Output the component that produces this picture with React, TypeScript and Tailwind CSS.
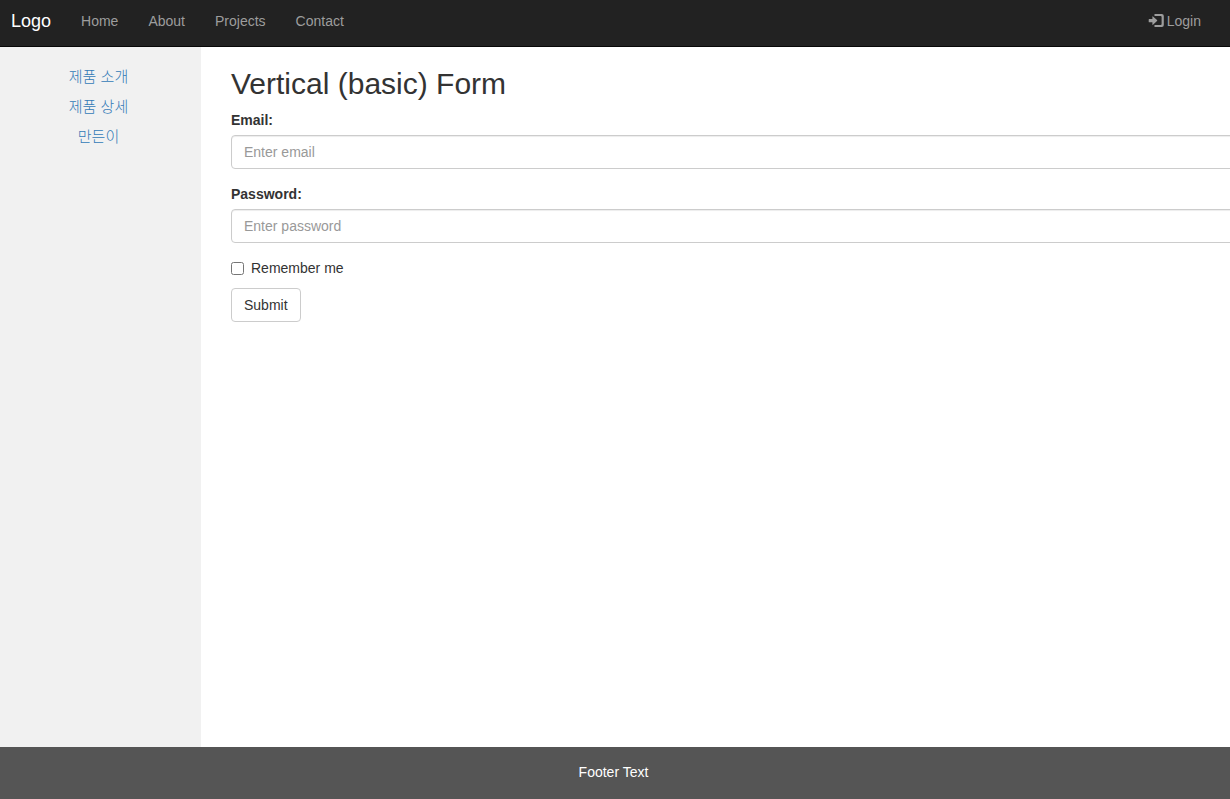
import React from "react";

const navItems = ["Home", "About", "Projects", "Contact"];
const sideItems = ["제품 소개", "제품 상세", "만든이"];

function LoginIcon() {
  return (
    <svg width="16" height="14" viewBox="0 0 16 14" fill="currentColor" aria-hidden="true">
      <path d="M1.2 5h3.2V2.6q0-.7.6-.2l4 3.7q.5.5 0 1L5 10.8q-.6.5-.6-.2V8.200H1.200Q.7 8.200.7 7.700V5.500Q.7 5 1.200 5z" />
      <path d="M6.500 0h7.300a2 2 0 0 1 2 2v9a2 2 0 0 1-2 2H6.500V11h6.100a1 1 0 0 0 1-1V3a1 1 0 0 0-1-1H6.500z" />
    </svg>
  );
}

function Navbar() {
  return (
    <nav className="flex items-center border-b border-[#080808] bg-[#222] pt-[11px] pb-[15px] pr-[29px] pl-[11px] leading-5 text-[#9d9d9d]">
      <a href="#" className="text-lg leading-5 text-white">Logo</a>
      <ul className="ml-[30px] flex gap-[30px]">
        {navItems.map((item) => (
          <li key={item}>
            <a href="#" className="hover:text-white">{item}</a>
          </li>
        ))}
      </ul>
      <a href="#" className="ml-auto flex items-center gap-[3px] hover:text-white">
        <LoginIcon />
        Login
      </a>
    </nav>
  );
}

function Field({ id, label, type, placeholder }: { id: string; label: string; type: string; placeholder: string }) {
  return (
    <div className="mb-[15px]">
      <label htmlFor={id} className="mb-[5px] block font-bold">{label}</label>
      <input
        id={id}
        type={type}
        placeholder={placeholder}
        className="block h-[34px] w-full rounded border border-[#ccc] bg-white px-3 py-1.5 text-[#555] shadow-[inset_0_1px_1px_rgba(0,0,0,0.075)] outline-none placeholder:text-[#999] focus:border-[#66afe9]"
      />
    </div>
  );
}

export default function App() {
  return (
    <div className="flex min-h-screen flex-col overflow-hidden bg-white font-['Liberation_Sans','Noto_Sans_CJK_KR',sans-serif] text-sm leading-5 text-[#333]">
      <Navbar />
      <div className="flex flex-1">
        <aside className="w-[201px] shrink-0 bg-[#f1f1f1] pt-5 pr-5 pl-4 text-center text-[15px] leading-5 font-light">
          {sideItems.map((item) => (
            <p key={item} className="mb-2.5">
              <a href="#" className="text-[#337ab7] hover:underline">{item}</a>
            </p>
          ))}
        </aside>
        <main className="min-w-0 flex-1 pt-5 pl-[30px]">
          <h2 className="mb-2.5 text-3xl leading-[33px]">Vertical (basic) Form</h2>
          <form className="-mr-8" onSubmit={(e) => e.preventDefault()}>
            <Field id="email" label="Email:" type="email" placeholder="Enter email" />
            <Field id="pwd" label="Password:" type="password" placeholder="Enter password" />
            <label className="mb-2.5 flex w-fit items-center gap-[7px]">
              <input type="checkbox" className="size-[13px]" />
              Remember me
            </label>
            <button type="submit" className="h-[34px] rounded border border-[#ccc] bg-white px-3 hover:bg-[#e6e6e6]">
              Submit
            </button>
          </form>
        </main>
      </div>
      <footer className="bg-[#555] pt-[15px] pr-[18px] pb-[17px] pl-[15px] text-center text-white">
        <p>Footer Text</p>
      </footer>
    </div>
  );
}
